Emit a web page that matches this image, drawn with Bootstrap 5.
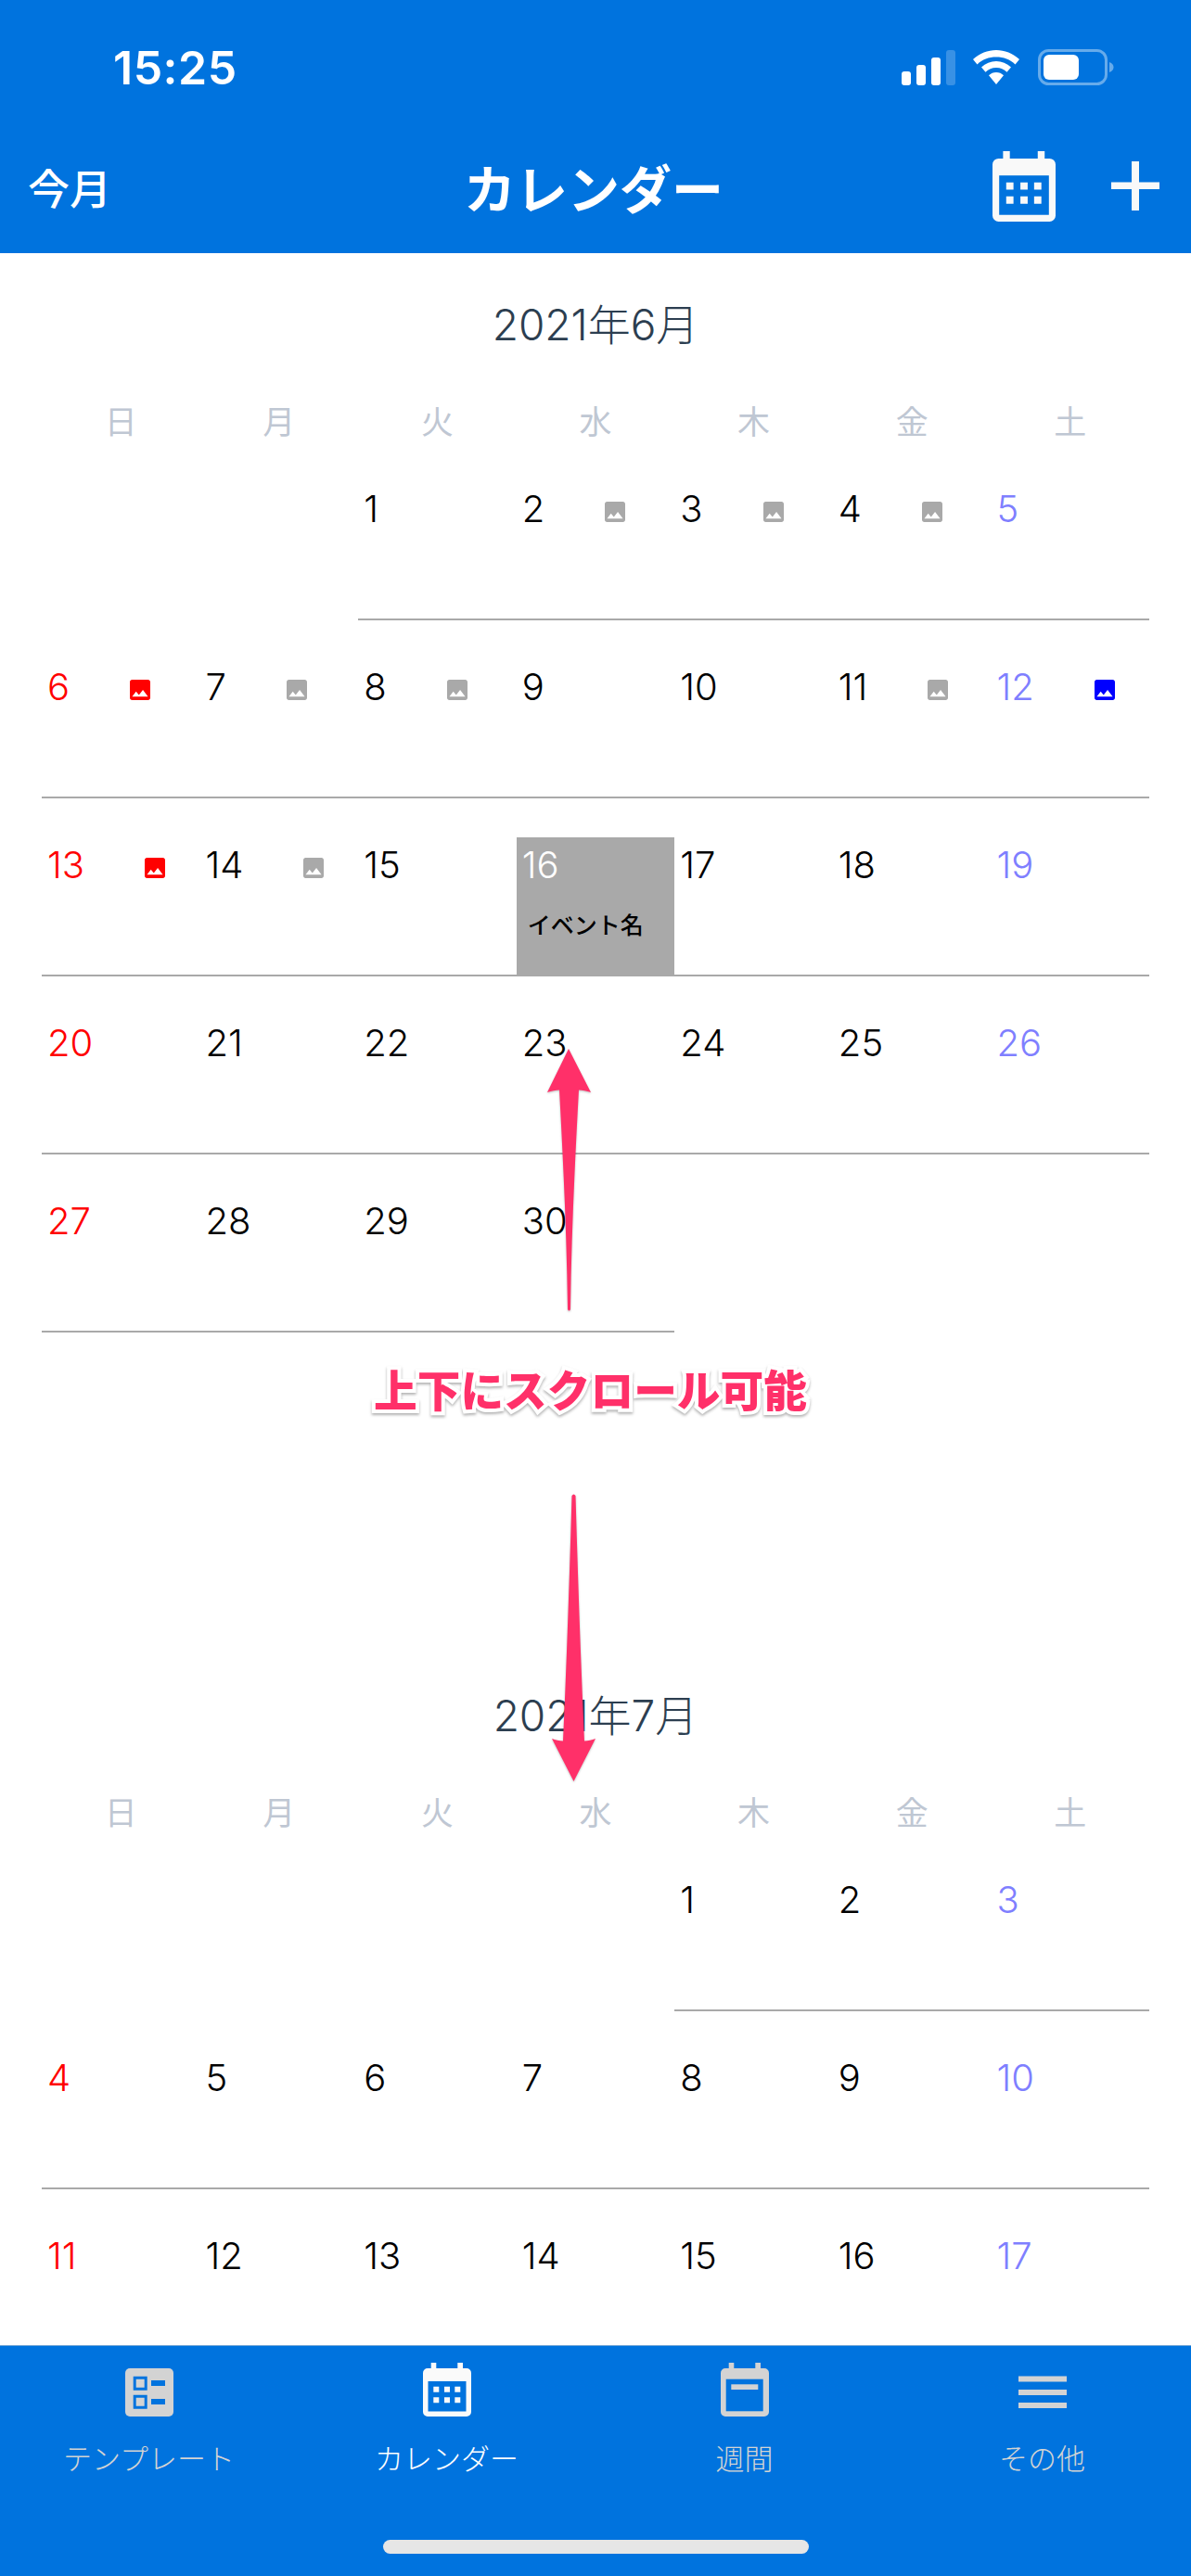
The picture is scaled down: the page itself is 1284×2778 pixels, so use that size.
<!DOCTYPE html>
<html lang="ja">
<head>
<meta charset="utf-8">
<title>カレンダー</title>
<link href="https://cdn.jsdelivr.net/npm/bootstrap@5.3.0/dist/css/bootstrap.min.css" rel="stylesheet">
<style>
:root { --app-blue: #0073de; }
html, body { height: 100%; margin: 0; }
body { font-family: Inter, "Noto Sans CJK JP", sans-serif; background: #fff; overflow: hidden; }
.app-shell { height: 2778px; }
.top-bar { background: var(--app-blue); color: #fff; height: 273px; flex: none; }
.status-row { height: 146px; padding: 0 82px 0 122px; }
.status-time { font-size: 50px; font-weight: 600; line-height: 1; letter-spacing: .5px; }
.nav-row { height: 127px; padding: 0 34px 10px 30px; display: grid; grid-template-columns: 1fr auto 1fr; align-items: center; }
.nav-today { font-size: 45px; font-weight: 500; line-height: 1; }
.nav-title { font-size: 56px; font-weight: 700; line-height: 1; }
.nav-actions { gap: 60px; padding-bottom: 8px; }
.cal-pane { flex: 1 1 0; min-height: 0; overflow: hidden; }
.month-block { height: 1500px; padding: 47px 45px 0; }
.month-title { height: 60px; line-height: 60px; font-size: 46px; font-weight: 300; color: #2c3e50; text-align: center; }
.week-head { display: grid; grid-template-columns: repeat(7, 1fr); height: 43px; margin-top: 54px; font-size: 35px; font-weight: 400; line-height: 43px; text-align: center; color: #bfc7d3; }
.day-grid { display: grid; grid-template-columns: repeat(7, 1fr); }
.day-cell { height: 150px; margin-top: 42px; padding: 7px 6px 0 6px; }
.day-cell.ruled { border-bottom: 2px solid #a9a9a9; }
.day-cell.picked { background: #a9a9a9; }
.day-cell.picked .day-num { color: #fff; }
.day-num { display: block; font-size: 40px; line-height: 46px; font-weight: 300; color: #000; }
.day-sun .day-num { color: #f00; }
.day-sat .day-num { color: #7f7fff; }
.pic-flag { width: 22px; height: 22px; margin: 15px 0 0 65px; flex: none; fill: #a9a9a9; }
.pic-flag.flag-red { fill: #f00; }
.pic-flag.flag-blue { fill: #00f; }
.event-name { font-size: 25px; font-weight: 500; line-height: 30px; color: #000; margin: 27px 0 0 6px; white-space: nowrap; }
.scroll-note { left: 403px; top: 1205px; font-size: 46.700px; line-height: 44px; font-weight: 900; color: #ff3069; white-space: nowrap; -webkit-text-stroke: 8px #fff; paint-order: stroke fill; filter: drop-shadow(0 2px 1.500px rgba(0,0,0,.3)); }
.note-arrow { left: 0; top: 0; filter: drop-shadow(0 1px 1px rgba(0,0,0,.25)); }
.tab-bar { background: var(--app-blue); border-top: 1px solid #6ea3d6; height: 249px; flex: none; padding-top: 18px; }
.tab-item { width: 25%; color: #d3d3d3; }
.tab-item.is-on { color: #fff; }
.tab-item svg { display: block; }
.tab-label { font-size: 31px; font-weight: 300; line-height: 40px; margin-top: 26px; }
.home-bar { width: 459px; height: 15px; margin: 67px auto 0; background: #e6e6e6; border-radius: 8px; }
</style>
</head>
<body>
<svg width="0" height="0" class="d-none">
  <symbol id="ic-cal" viewBox="0 0 52 58"><path fill="currentColor" d="M8.700 0h5.600v6h23V0H43v6h4a5 5 0 0 1 5 5v42a5 5 0 0 1-5 5H5a5 5 0 0 1-5-5V11a5 5 0 0 1 5-5h3.700z"/><rect x="5.500" y="20" width="41" height="32.500" fill="#0073de"/><path fill="currentColor" d="M11.300 25.700h6v6h-6zM23 25.700h6v6h-6zM34.300 25.700h6v6h-6zM11.300 37.300h6v6h-6zM23 37.300h6v6h-6zM34.300 37.300h6v6h-6z"/></symbol>
  <symbol id="ic-pic" viewBox="3 3 18 18"><path d="M21 19V5c0-1.100-.9-2-2-2H5c-1.100 0-2 .9-2 2v14c0 1.100.9 2 2 2h14c1.100 0 2-.9 2-2zM8.500 13.500l2.500 3.010L14.500 12l4.500 6H5l3.500-4.500z"/></symbol>
</svg>
<div class="app-shell d-flex flex-column">
  <header class="top-bar">
    <div class="status-row d-flex align-items-center justify-content-between">
      <span class="status-time">15:25</span>
      <svg width="230" height="40" viewBox="0 0 230 40" fill="#fff">
        <rect x="0" y="24" width="10" height="15" rx="3"/><rect x="16" y="17" width="10" height="22" rx="3"/><rect x="32" y="9" width="10" height="30" rx="3"/><rect x="48" y="1" width="10" height="38" rx="3" opacity=".22"/>
        <path d="M102 1c9 0 18 3.500 25 10l-4.500 5.500C117 11 110 8.500 102 8.500S87 11 81.500 16.500L77 11C84 4.500 93 1 102 1z"/>
        <path d="M102 13c6 0 11.500 2.200 16 6.500l-4.500 5.200c-3-3-7-4.700-11.500-4.700s-8.500 1.700-11.500 4.700L86 19.500C90.500 15.200 96 13 102 13z"/>
        <path d="M102 25c3 0 6 1.200 8 3.300L102 38l-8-9.700c2-2.100 5-3.300 8-3.300z"/>
        <rect x="148.500" y="1.500" width="72" height="36" rx="10" fill="none" stroke="#fff" stroke-opacity=".4" stroke-width="3"/>
        <rect x="153" y="6" width="38" height="27" rx="6"/>
        <path d="M224 14c3 1 4.500 3 4.500 5.500S227 24 224 25z" opacity=".4"/>
      </svg>
    </div>
    <div class="nav-row">
      <span class="nav-today">今月</span>
      <span class="nav-title">カレンダー</span>
      <div class="nav-actions d-flex align-items-center justify-content-end">
        <svg width="68" height="76" style="color:#f9f9f9"><use href="#ic-cal"/></svg>
        <svg width="52" height="53" viewBox="0 0 52 53" fill="#f9f9f9"><path d="M22 0h8v22.500h22v7.500H30v23h-8V30H0v-7.500h22z"/></svg>
      </div>
    </div>
  </header>

  <main class="cal-pane position-relative">
    <section class="month-block">
      <div class="month-title">2021年6月</div>
      <div class="week-head"><span>日</span><span>月</span><span>火</span><span>水</span><span>木</span><span>金</span><span>土</span></div>
      <div class="day-grid">
        <div class="day-cell"></div>
        <div class="day-cell"></div>
        <div class="day-cell ruled"><span class="day-num">1</span></div>
        <div class="day-cell ruled d-flex align-items-start"><span class="day-num">2</span><svg class="pic-flag"><use href="#ic-pic"/></svg></div>
        <div class="day-cell ruled d-flex align-items-start"><span class="day-num">3</span><svg class="pic-flag"><use href="#ic-pic"/></svg></div>
        <div class="day-cell ruled d-flex align-items-start"><span class="day-num">4</span><svg class="pic-flag"><use href="#ic-pic"/></svg></div>
        <div class="day-cell ruled day-sat"><span class="day-num">5</span></div>

        <div class="day-cell ruled day-sun d-flex align-items-start"><span class="day-num">6</span><svg class="pic-flag flag-red"><use href="#ic-pic"/></svg></div>
        <div class="day-cell ruled d-flex align-items-start"><span class="day-num">7</span><svg class="pic-flag"><use href="#ic-pic"/></svg></div>
        <div class="day-cell ruled d-flex align-items-start"><span class="day-num">8</span><svg class="pic-flag"><use href="#ic-pic"/></svg></div>
        <div class="day-cell ruled"><span class="day-num">9</span></div>
        <div class="day-cell ruled"><span class="day-num">10</span></div>
        <div class="day-cell ruled d-flex align-items-start"><span class="day-num">11</span><svg class="pic-flag"><use href="#ic-pic"/></svg></div>
        <div class="day-cell ruled day-sat d-flex align-items-start"><span class="day-num">12</span><svg class="pic-flag flag-blue"><use href="#ic-pic"/></svg></div>

        <div class="day-cell ruled day-sun d-flex align-items-start"><span class="day-num">13</span><svg class="pic-flag flag-red"><use href="#ic-pic"/></svg></div>
        <div class="day-cell ruled d-flex align-items-start"><span class="day-num">14</span><svg class="pic-flag"><use href="#ic-pic"/></svg></div>
        <div class="day-cell ruled"><span class="day-num">15</span></div>
        <div class="day-cell ruled picked"><span class="day-num">16</span><div class="event-name">イベント名</div></div>
        <div class="day-cell ruled"><span class="day-num">17</span></div>
        <div class="day-cell ruled"><span class="day-num">18</span></div>
        <div class="day-cell ruled day-sat"><span class="day-num">19</span></div>

        <div class="day-cell ruled day-sun"><span class="day-num">20</span></div>
        <div class="day-cell ruled"><span class="day-num">21</span></div>
        <div class="day-cell ruled"><span class="day-num">22</span></div>
        <div class="day-cell ruled"><span class="day-num">23</span></div>
        <div class="day-cell ruled"><span class="day-num">24</span></div>
        <div class="day-cell ruled"><span class="day-num">25</span></div>
        <div class="day-cell ruled day-sat"><span class="day-num">26</span></div>

        <div class="day-cell ruled day-sun"><span class="day-num">27</span></div>
        <div class="day-cell ruled"><span class="day-num">28</span></div>
        <div class="day-cell ruled"><span class="day-num">29</span></div>
        <div class="day-cell ruled"><span class="day-num">30</span></div>
      </div>
    </section>
    <section class="month-block">
      <div class="month-title">2021年7月</div>
      <div class="week-head"><span>日</span><span>月</span><span>火</span><span>水</span><span>木</span><span>金</span><span>土</span></div>
      <div class="day-grid">
        <div class="day-cell"></div>
        <div class="day-cell"></div>
        <div class="day-cell"></div>
        <div class="day-cell"></div>
        <div class="day-cell ruled"><span class="day-num">1</span></div>
        <div class="day-cell ruled"><span class="day-num">2</span></div>
        <div class="day-cell ruled day-sat"><span class="day-num">3</span></div>

        <div class="day-cell ruled day-sun"><span class="day-num">4</span></div>
        <div class="day-cell ruled"><span class="day-num">5</span></div>
        <div class="day-cell ruled"><span class="day-num">6</span></div>
        <div class="day-cell ruled"><span class="day-num">7</span></div>
        <div class="day-cell ruled"><span class="day-num">8</span></div>
        <div class="day-cell ruled"><span class="day-num">9</span></div>
        <div class="day-cell ruled day-sat"><span class="day-num">10</span></div>

        <div class="day-cell ruled day-sun"><span class="day-num">11</span></div>
        <div class="day-cell ruled"><span class="day-num">12</span></div>
        <div class="day-cell ruled"><span class="day-num">13</span></div>
        <div class="day-cell ruled"><span class="day-num">14</span></div>
        <div class="day-cell ruled"><span class="day-num">15</span></div>
        <div class="day-cell ruled"><span class="day-num">16</span></div>
        <div class="day-cell ruled day-sat"><span class="day-num">17</span></div>
      </div>
    </section>

    <svg class="note-arrow position-absolute" width="1284" height="2256" viewBox="0 273 1284 2256" fill="#ff3069">
      <path d="M613 1131L637 1178C632 1176.500 628 1175.500 624 1175.500C620 1250 616 1330 615 1412Q613.500 1415 612 1412C611 1330 607 1250 603 1175.500C599 1175.500 595 1176.500 590 1178Z"/>
      <path d="M618.500 1921L642 1875C638 1876.500 634 1877.500 630 1877.500C626 1790 623 1700 620.500 1613Q618.500 1610 616.500 1613C614 1700 611 1790 607 1877.500C603 1877.500 599 1876.500 595 1875Z"/>
    </svg>
    <div class="scroll-note position-absolute">上下にスクロール可能</div>
  </main>

  <nav class="tab-bar">
    <div class="d-flex">
      <div class="tab-item d-flex flex-column align-items-center">
        <svg width="52" height="58" viewBox="0 0 52 58"><rect y="6" width="52" height="52" rx="5" fill="#d3d3d3"/><path fill="#0073de" d="M8.700 14.700h15v15h-15zM8.700 34.700h15v15h-15zM28 19h15v6H28zM28 39h15v6H28z"/><path fill="#d3d3d3" d="M11.700 17.700h9v9h-9zM11.700 37.700h9v9h-9z"/></svg>
        <span class="tab-label">テンプレート</span>
      </div>
      <div class="tab-item is-on d-flex flex-column align-items-center">
        <svg width="52" height="58" style="color:#fafafa"><use href="#ic-cal"/></svg>
        <span class="tab-label">カレンダー</span>
      </div>
      <div class="tab-item d-flex flex-column align-items-center">
        <svg width="52" height="58" viewBox="0 0 52 58"><path fill="#d3d3d3" d="M8.700 0h5.600v6h23V0H43v6h4a5 5 0 0 1 5 5v42a5 5 0 0 1-5 5H5a5 5 0 0 1-5-5V11a5 5 0 0 1 5-5h3.700z"/><rect x="5.700" y="17.700" width="40" height="34.600" fill="#0073de"/><rect x="11.300" y="23.300" width="29" height="5.700" fill="#d3d3d3"/></svg>
        <span class="tab-label">週間</span>
      </div>
      <div class="tab-item d-flex flex-column align-items-center">
        <svg width="52" height="58" viewBox="0 0 52 58" fill="#d3d3d3"><rect y="14.500" width="52" height="6"/><rect y="29" width="52" height="6"/><rect y="43" width="52" height="6"/></svg>
        <span class="tab-label">その他</span>
      </div>
    </div>
    <div class="home-bar"></div>
  </nav>
</div>
<script src="https://cdn.jsdelivr.net/npm/bootstrap@5.3.0/dist/js/bootstrap.bundle.min.js"></script>
</body>
</html>
